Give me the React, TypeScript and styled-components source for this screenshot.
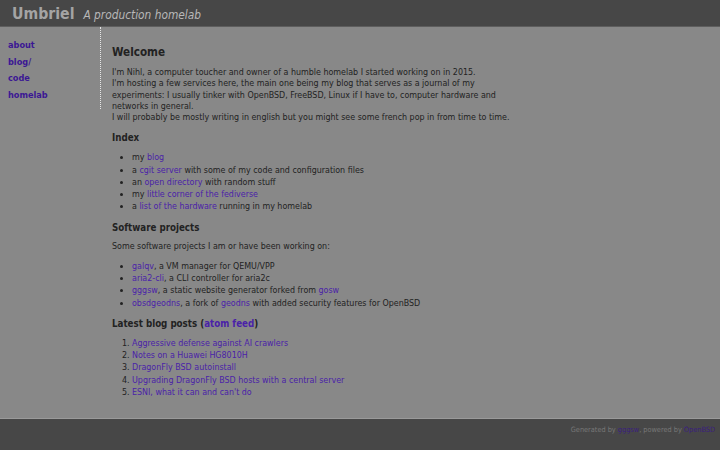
import styled, { createGlobalStyle } from 'styled-components';

const GlobalStyle = createGlobalStyle`
  html, body {
    margin: 0;
    padding: 0;
    background: #888888;
  }
  body {
    font-family: 'DejaVu Sans Condensed', 'DejaVu Sans', sans-serif;
    font-size: 8.85px;
    color: #222222;
  }
`;

const nav = ['about', 'blog/', 'code', 'homelab'] as const;

const services = [
  { pre: 'my ', link: 'blog', post: '' },
  { pre: 'a ', link: 'cgit server', post: ' with some of my code and configuration files' },
  { pre: 'an ', link: 'open directory', post: ' with random stuff' },
  { pre: 'my ', link: 'little corner of the fediverse', post: '' },
  { pre: 'a ', link: 'list of the hardware', post: ' running in my homelab' },
];

const posts = [
  'Aggressive defense against AI crawlers',
  'Notes on a Huawei HG8010H',
  'DragonFly BSD autoinstall',
  'Upgrading DragonFly BSD hosts with a central server',
  "ESNI, what it can and can't do",
];

export default function App() {
  return (
    <>
      <GlobalStyle />
      <Page>
        <Header>
          <SiteName>Umbriel</SiteName>
          <Tagline>A production homelab</Tagline>
        </Header>
        <Body>
          <Sidebar>
            {nav.map((item) => (
              <NavLink key={item} href="#">
                {item}
              </NavLink>
            ))}
          </Sidebar>
          <Main>
            <H2>Welcome</H2>
            <P>
              I'm Nihl, a computer toucher and owner of a humble homelab I started working on in 2015.
              <br />
              I'm hosting a few services here, the main one being my blog that serves as a journal of my
              experiments: I usually tinker with OpenBSD, FreeBSD, Linux if I have to, computer hardware and
              networks in general.
              <br />I will probably be mostly writing in english but you might see some french pop in from time to
              time.
            </P>

            <H3>Index</H3>
            <Ul>
              {services.map((s) => (
                <Li key={s.link}>
                  {s.pre}
                  <A href="#">{s.link}</A>
                  {s.post}
                </Li>
              ))}
            </Ul>

            <H3>Software projects</H3>
            <P>Some software projects I am or have been working on:</P>
            <Ul>
              <Li>
                <A href="#">galqv</A>, a VM manager for QEMU/VPP
              </Li>
              <Li>
                <A href="#">aria2-cli</A>, a CLI controller for aria2c
              </Li>
              <Li>
                <A href="#">gggsw</A>, a static website generator forked from <A href="#">gosw</A>
              </Li>
              <Li>
                <A href="#">obsdgeodns</A>, a fork of <A href="#">geodns</A> with added security features for
                OpenBSD
              </Li>
            </Ul>

            <H3>
              Latest blog posts (<A href="#">atom feed</A>)
            </H3>
            <Ol>
              {posts.map((p) => (
                <Li key={p}>
                  <A href="#">{p}</A>
                </Li>
              ))}
            </Ol>
          </Main>
        </Body>
        <Footer>
          Generated by <FootLink href="#">gggsw</FootLink>, powered by <FootLink href="#">OpenBSD</FootLink>
        </Footer>
      </Page>
    </>
  );
}

const Page = styled.div`
  display: flex;
  flex-direction: column;
  min-height: 450px;
`;

const Header = styled.header`
  display: flex;
  align-items: baseline;
  gap: 9px;
  height: 27px;
  box-sizing: border-box;
  padding: 4px 12px 0;
  background: #474747;
  border-bottom: 1px solid #5e5e5e;
`;

const SiteName = styled.span`
  font-size: 15.7px;
  font-weight: bold;
  line-height: 19px;
  color: #a4a4a4;
`;

const Tagline = styled.span`
  font-size: 11.8px;
  font-style: italic;
  color: #b8b8b8;
`;

const Body = styled.div`
  display: flex;
  height: 391px;
`;

const Sidebar = styled.nav`
  display: flex;
  flex-direction: column;
  align-self: flex-start;
  width: 92px;
  height: 69px;
  padding: 13px 0 0 8px;
  box-sizing: content-box;
  gap: 6.7px;
  border-right: 1px dotted #e8e8e8;
`;

const NavLink = styled.a`
  font-size: 9.1px;
  font-weight: bold;
  line-height: 10px;
  color: #3b1794;
  text-decoration: none;
`;

const Main = styled.main`
  flex: 1;
  padding: 0 0 0 11px;
`;

const H2 = styled.h2`
  font-size: 11.6px;
  line-height: 13px;
  margin: 18.5px 0 8.5px;
`;

const H3 = styled.h3`
  font-size: 9.7px;
  line-height: 11px;
  margin: 9px 0 8px;
`;

const P = styled.p`
  width: 410px;
  margin: 0 0 8px;
  line-height: 11.25px;
`;

const Ul = styled.ul`
  margin: 0 0 8px;
  padding-left: 20px;
`;

const Ol = styled.ol`
  margin: 0;
  padding-left: 20px;
`;

const Li = styled.li`
  line-height: 12.25px;
`;

const A = styled.a`
  color: #4a22a8;
  text-decoration: none;
`;

const Footer = styled.footer`
  height: 32px;
  box-sizing: border-box;
  padding: 6px 5px 0 0;
  text-align: right;
  font-size: 7.3px;
  color: #777777;
  background: #474747;
  border-top: 1px solid #9a9a9a;
`;

const FootLink = styled.a`
  color: #3a1d80;
  text-decoration: none;
`;
